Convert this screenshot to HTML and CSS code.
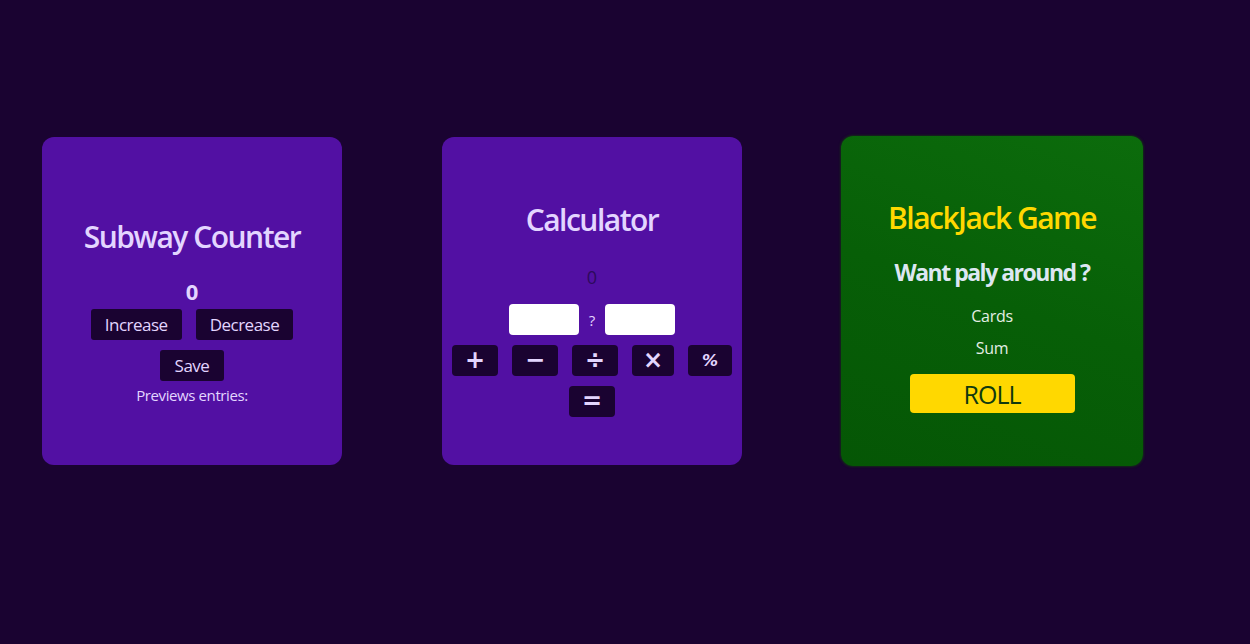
FILE: index.html
```html
<!DOCTYPE html>
<html lang="en">
<head>
<meta charset="utf-8">
<title>Apps</title>
<link rel="stylesheet" href="styles.css">
</head>
<body>
<main class="apps">
  <section class="card card-counter">
    <h1 class="title">Subway Counter</h1>
    <div class="count">0</div>
    <div class="btn-row">
      <button class="btn">Increase</button>
      <button class="btn">Decrease</button>
    </div>
    <button class="btn btn-save">Save</button>
    <p class="entries">Previews entries:</p>
  </section>

  <section class="card card-calc">
    <h1 class="title">Calculator</h1>
    <div class="result">0</div>
    <div class="inputs">
      <input class="num" type="text">
      <span class="qmark">?</span>
      <input class="num" type="text">
    </div>
    <div class="ops">
      <button class="op op-w46">+</button>
      <button class="op op-w46">−</button>
      <button class="op op-w46">÷</button>
      <button class="op op-w42">×</button>
      <button class="op op-w44 op-pct">%</button>
    </div>
    <button class="op op-w46 op-eq">=</button>
  </section>

  <section class="card card-bj">
    <h1 class="title bj-title">BlackJack Game</h1>
    <h2 class="bj-sub">Want paly around ?</h2>
    <p class="bj-line bj-cards">Cards</p>
    <p class="bj-line bj-sum">Sum</p>
    <button class="roll">ROLL</button>
  </section>
</main>
</body>
</html>
```

FILE: styles.css
```css
html, body {
  margin: 0;
  padding: 0;
  background: #1a0331;
  font-family: "Open Sans", "Noto Sans", sans-serif;
  color: #e3d5ff;
}

.apps {
  display: flex;
  gap: 100px;
  padding: 137px 42px;
  align-items: flex-start;
}

.card {
  box-sizing: border-box;
  width: 300px;
  height: 328px;
  border-radius: 12px;
  background: #5210a3;
  display: flex;
  flex-direction: column;
  align-items: center;
  text-align: center;
}

.title {
  margin: 0;
  font-size: 30px;
  line-height: 38px;
  font-weight: 600;
  letter-spacing: -1.5px;
  color: #e3d5ff;
}

/* counter */
.card-counter { padding-top: 81px; }

.count {
  margin-top: 22px;
  font-size: 22px;
  line-height: 26px;
  font-weight: 700;
}

.btn-row {
  display: flex;
  gap: 14px;
  margin-top: 5px;
}

.btn {
  height: 31px;
  padding: 0 14px;
  border: none;
  border-radius: 3px;
  background: #1a0331;
  color: #e3d5ff;
  font-family: inherit;
  font-size: 17px;
  letter-spacing: -0.5px;
}

.btn-save {
  margin-top: 10px;
  padding: 0 15px;
}

.entries {
  margin: 4px 0 0;
  font-size: 15px;
  line-height: 20px;
  letter-spacing: -0.4px;
}

/* calculator */
.card-calc { padding-top: 64px; }

.result {
  margin-top: 27px;
  font-size: 18px;
  line-height: 22px;
  color: #2d0a5c;
}

.inputs {
  display: flex;
  align-items: center;
  gap: 9.5px;
  margin-top: 16px;
}

.num {
  box-sizing: border-box;
  width: 70px;
  height: 31px;
  border: none;
  border-radius: 4px;
  background: #fff;
  padding: 0;
}

.qmark {
  font-size: 15px;
}

.ops {
  display: flex;
  gap: 14px;
  margin-top: 10px;
}

.op {
  height: 31px;
  padding: 0;
  border: none;
  border-radius: 4px;
  background: #1a0331;
  color: #e3d5ff;
  font-family: "DejaVu Sans", sans-serif;
  font-weight: 700;
  font-size: 24px;
  line-height: 31px;
}

.op-w46 { width: 46px; }
.op-w42 { width: 42px; }
.op-w44 { width: 44px; }
.op-pct { font-size: 16px; font-style: italic; }
.op-eq { margin-top: 10px; }

/* blackjack */
.card-bj {
  width: 302px;
  height: 330px;
  margin: -1px 0 0 -1px;
  padding-top: 63px;
  background: linear-gradient(200deg, #0c6c0c 0%, #075f07 50%, #055605 100%);
  box-shadow: 0 0 2px 1px rgba(20, 50, 20, 0.8);
}

.bj-title {
  color: #ffd800;
}

.bj-sub {
  margin: 20px 0 0;
  font-size: 23px;
  line-height: 30px;
  font-weight: 700;
  letter-spacing: -1.5px;
  color: #dde7f2;
}

.bj-line {
  margin: 0;
  font-size: 16px;
  line-height: 20px;
  color: #e4eee4;
  letter-spacing: -0.3px;
}

.bj-cards { margin-top: 19px; }
.bj-sum { margin-top: 12px; }

.roll {
  margin-top: 16px;
  width: 165px;
  height: 39px;
  border: none;
  border-radius: 4px;
  background: #ffd800;
  color: #0f3a0f;
  font-family: inherit;
  font-size: 25px;
  font-weight: 500;
  letter-spacing: -1px;
  padding: 0;
}
```
